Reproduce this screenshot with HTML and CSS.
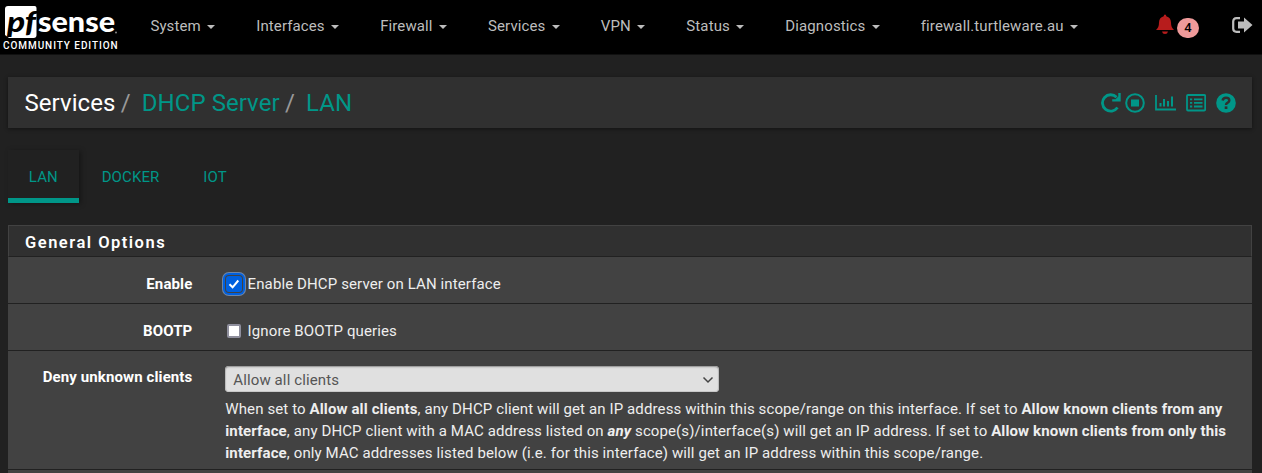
FILE: index.html
```html
<!DOCTYPE html>
<html lang="en">
<head>
<meta charset="utf-8">
<title>Services: DHCP Server: LAN</title>
<link rel="stylesheet" href="styles.css">
</head>
<body>
<header class="navbar">
  <a class="brand">
    <svg class="logo" width="122" height="34" viewBox="0 0 122 34">
      <path class="tile" d="M8 1H34.500Q36.500 1 36.500 3V30Q36.500 33 33.500 33H9L5 30V4Q5 1 8 1Z"/>
      <text class="logo-pf" x="7" y="27" textLength="29" lengthAdjust="spacingAndGlyphs">pf</text>
      <text class="logo-sense" x="38" y="27" textLength="77" lengthAdjust="spacingAndGlyphs">sense</text>
      <circle class="dot" cx="116" cy="27.500" r="1"/>
    </svg>
    <span class="edition">COMMUNITY EDITION</span>
  </a>
  <nav class="menu">
    <a>System<i class="caret"></i></a>
    <a>Interfaces<i class="caret"></i></a>
    <a>Firewall<i class="caret"></i></a>
    <a>Services<i class="caret"></i></a>
    <a>VPN<i class="caret"></i></a>
    <a>Status<i class="caret"></i></a>
    <a>Diagnostics<i class="caret"></i></a>
    <a>firewall.turtleware.au<i class="caret"></i></a>
  </nav>
  <div class="tools">
    <svg class="bell" width="18" height="21" viewBox="0 0 18 21"><path d="M9 0.500Q10.300 0.500 10.300 2.200C13.500 3 15 5.500 15 8.500C15 12.500 16 14 18 16H0C2 14 3 12.500 3 8.500C3 5.500 4.500 3 7.700 2.200Q7.700 0.500 9 0.500ZM6 17.500H12Q11.500 20 9 20T6 17.500Z"/></svg>
    <span class="badge">4</span>
    <svg class="logout" width="21" height="16" viewBox="0 0 21 16"><path d="M8 1.200H4.500Q1.200 1.200 1.200 4.500V11.500Q1.200 14.800 4.500 14.800H8" fill="none" stroke="#bdbdbd" stroke-width="2.200"/><path d="M6 4.500H12V0.500L20.500 8L12 15.500V11.500H6Z" fill="#bdbdbd"/></svg>
  </div>
</header>
<main>
  <div class="page-head">
    <h1 class="crumbs"><span>Services</span><i>/</i><a>DHCP Server</a><i>/</i><a>LAN</a></h1>
    <div class="actions">
      <svg width="20" height="20" viewBox="0 0 20 20"><path d="M16.500 14.500A8.200 8.200 0 1 1 15.600 4.300" fill="none" stroke="currentColor" stroke-width="2.800"/><path d="M19.700 0V8.500H11.200V6.300H14.500L17.300 3.500V0Z" fill="currentColor"/></svg>
      <svg width="20" height="20" viewBox="0 0 20 20"><circle cx="10" cy="10" r="8.800" fill="none" stroke="currentColor" stroke-width="2"/><path d="M6 6.500H14V13.500H6Z" fill="currentColor"/></svg>
      <svg width="21" height="20" viewBox="0 0 21 20"><path d="M1 2V16.500H21" fill="none" stroke="currentColor" stroke-width="1.800"/><path d="M5.500 10V13.500M9 6V13.500M13 8V13.500M17 3.500V13.500" fill="none" stroke="currentColor" stroke-width="2"/></svg>
      <svg width="20" height="20" viewBox="0 0 20 20"><rect x="1" y="2" width="18.200" height="15.500" rx="1" fill="none" stroke="currentColor" stroke-width="1.800"/><path d="M4 6.300H6.200M4 9.900H6.200M4 13.500H6.200M8 6.300H16.500M8 9.900H16.500M8 13.500H16.500" fill="none" stroke="currentColor" stroke-width="1.800"/></svg>
      <svg width="20" height="20" viewBox="0 0 20 20"><circle cx="10" cy="10" r="9.800" fill="currentColor"/><path d="M6.600 7.500Q7.200 4.800 10 4.800Q13.300 4.800 13.300 7.400Q13.300 8.700 11.700 9.600Q10 10.500 10 12" fill="none" stroke="#303030" stroke-width="2.500"/><path d="M8.700 13.400H11.400V16H8.700Z" fill="#303030"/></svg>
    </div>
  </div>
  <ul class="tabs">
    <li class="active">LAN</li>
    <li>DOCKER</li>
    <li>IOT</li>
  </ul>
  <section class="panel">
    <h2>General Options</h2>
    <div class="row">
      <label class="name">Enable</label>
      <div class="field"><span class="check checked"><svg width="14" height="14" viewBox="0 0 14 14"><path d="M2.500 7.300L5.600 10.300L11.300 3.500" fill="none" stroke="#fff" stroke-width="2"/></svg></span>Enable DHCP server on LAN interface</div>
    </div>
    <div class="row">
      <label class="name">BOOTP</label>
      <div class="field"><span class="check"></span>Ignore BOOTP queries</div>
    </div>
    <div class="row tall">
      <label class="name">Deny unknown clients</label>
      <div>
        <div class="select">Allow all clients<svg width="12" height="8" viewBox="0 0 12 8"><path d="M1.500 1.500L6 6L10.500 1.500" fill="none" stroke="#444" stroke-width="1.500"/></svg></div>
        <p class="help">When set to <b>Allow all clients</b>, any DHCP client will get an IP address within this scope/range on this interface. If set to <b>Allow known clients from any<br>interface</b>, any DHCP client with a MAC address listed on <b><em>any</em></b> scope(s)/interface(s) will get an IP address. If set to <b>Allow known clients from only this<br>interface</b>, only MAC addresses listed below (i.e. for this interface) will get an IP address within this scope/range.</p>
      </div>
    </div>
  </section>
</main>
</body>
</html>
```
FILE: styles.css
```css
* { box-sizing: border-box; }
body {
  margin: 0;
  background: #212121;
  color: #eee;
  font: 15px/22px Roboto, sans-serif;
  letter-spacing: .115px;
}
.navbar {
  display: flex;
  height: 55px;
  background: #000;
  border-bottom: 1px solid #101010;
}
.brand { width: 130px; padding-top: 5px; display: flex; flex-direction: column; }
.logo { display: block; overflow: visible; letter-spacing: 0; }
.tile, .logo-sense { fill: #fff; }
.dot { fill: #888; }
.logo-pf { font: italic 900 29px Lato, sans-serif; fill: #000; }
.logo-sense { font: 900 29px Lato, sans-serif; }
.edition { padding-left: 3px; font-size: 10px; line-height: 14px; font-weight: 500; letter-spacing: .93px; color: #fff; white-space: nowrap; }
.menu { display: flex; flex: 1; color: #bdbdbd; }
.menu a { padding: 15px 20.5px 0 20.4px; white-space: nowrap; }
.caret {
  display: inline-block;
  margin-left: 6.5px;
  vertical-align: middle;
  border: 4px solid transparent;
  border-top-color: #bdbdbd;
  border-bottom: 0;
}
.tools { display: flex; width: 106px; }
.bell { margin-top: 14px; fill: #b71c1c; }
.badge {
  width: 22px;
  height: 20px;
  margin: 18px 33px 0 3px;
  border-radius: 10px;
  background: #ef9a9a;
  color: #000;
  font-size: 13px;
  line-height: 20px;
  font-weight: 500;
  text-align: center;
}
.logout { margin-top: 17px; }
main { padding: 22px 10px 0 8px; }
.page-head {
  display: flex;
  justify-content: space-between;
  height: 51px;
  padding: 0 16px 0 16.5px;
  background: #303030;
  box-shadow: 0 1px 4px rgba(0, 0, 0, .45);
}
.crumbs { margin: 0; padding-top: 1px; font-size: 24px; font-weight: 400; line-height: 51px; color: #fff; letter-spacing: .05px; }
.crumbs i { margin: 0 11px 0 5.5px; font-style: normal; color: #999; }
.crumbs a, .actions { color: #009688; }
.actions { display: flex; gap: 10px; padding-top: 16px; }
.actions svg:first-child { margin-right: -6px; }
.tabs {
  display: flex;
  height: 53px;
  margin: 22px 0;
  padding: 0;
  list-style: none;
  color: #009688;
  line-height: 55px;
}
.tabs li { padding: 0 21px 0 20.8px; margin-right: 2px; }
.tabs .active { border-bottom: 5px solid #009688; box-shadow: 2px 1px 5px rgba(0, 0, 0, .35); }
.panel { background: #424242; height: 248px; overflow: hidden; }
.panel h2 {
  margin: 0;
  height: 32px;
  padding-left: 16px;
  border: 1px solid #424242;
  border-bottom-color: #212121;
  background: #303030;
  color: #fff;
  font-size: 16.5px;
  font-weight: 600;
  line-height: 33px;
  letter-spacing: 1.5px;
}
.row {
  display: grid;
  grid-template-columns: 184.4px 1fr;
  column-gap: 32.9px;
  height: 47px;
  padding-top: 16px;
  border-bottom: 1px solid #212121;
}
.tall { height: 119px; padding-top: 15px; }
.name { color: #fff; font-weight: 700; text-align: right; }
.field { display: flex; align-items: flex-start; }
.check { width: 14px; height: 14px; margin: 4px 7px 0 1.3px; flex: none; border: 2px solid #8f8f9d; border-radius: 2px; background: #fff; }
.checked {
  display: flex;
  width: 16px;
  height: 16px;
  margin: 3px 6px 0 .3px;
  border: 0;
  padding: 1px;
  background: #0060df;
  border-radius: 3px;
  box-shadow: 0 0 0 1px #424242, 0 0 0 3px #0060df, 0 0 0 4px #6d85a8;
}
.select {
  display: flex;
  align-items: center;
  justify-content: space-between;
  width: 494px;
  height: 26px;
  padding: 1px 5px 0 8px;
  border-radius: 4px;
  background: #e0e0e0;
  box-shadow: inset 0 1px 2px rgba(0, 0, 0, .3), inset 0 0 0 1px #ccc;
  color: #555;
}
.help { margin: 6px 0 0; white-space: nowrap; }
```
